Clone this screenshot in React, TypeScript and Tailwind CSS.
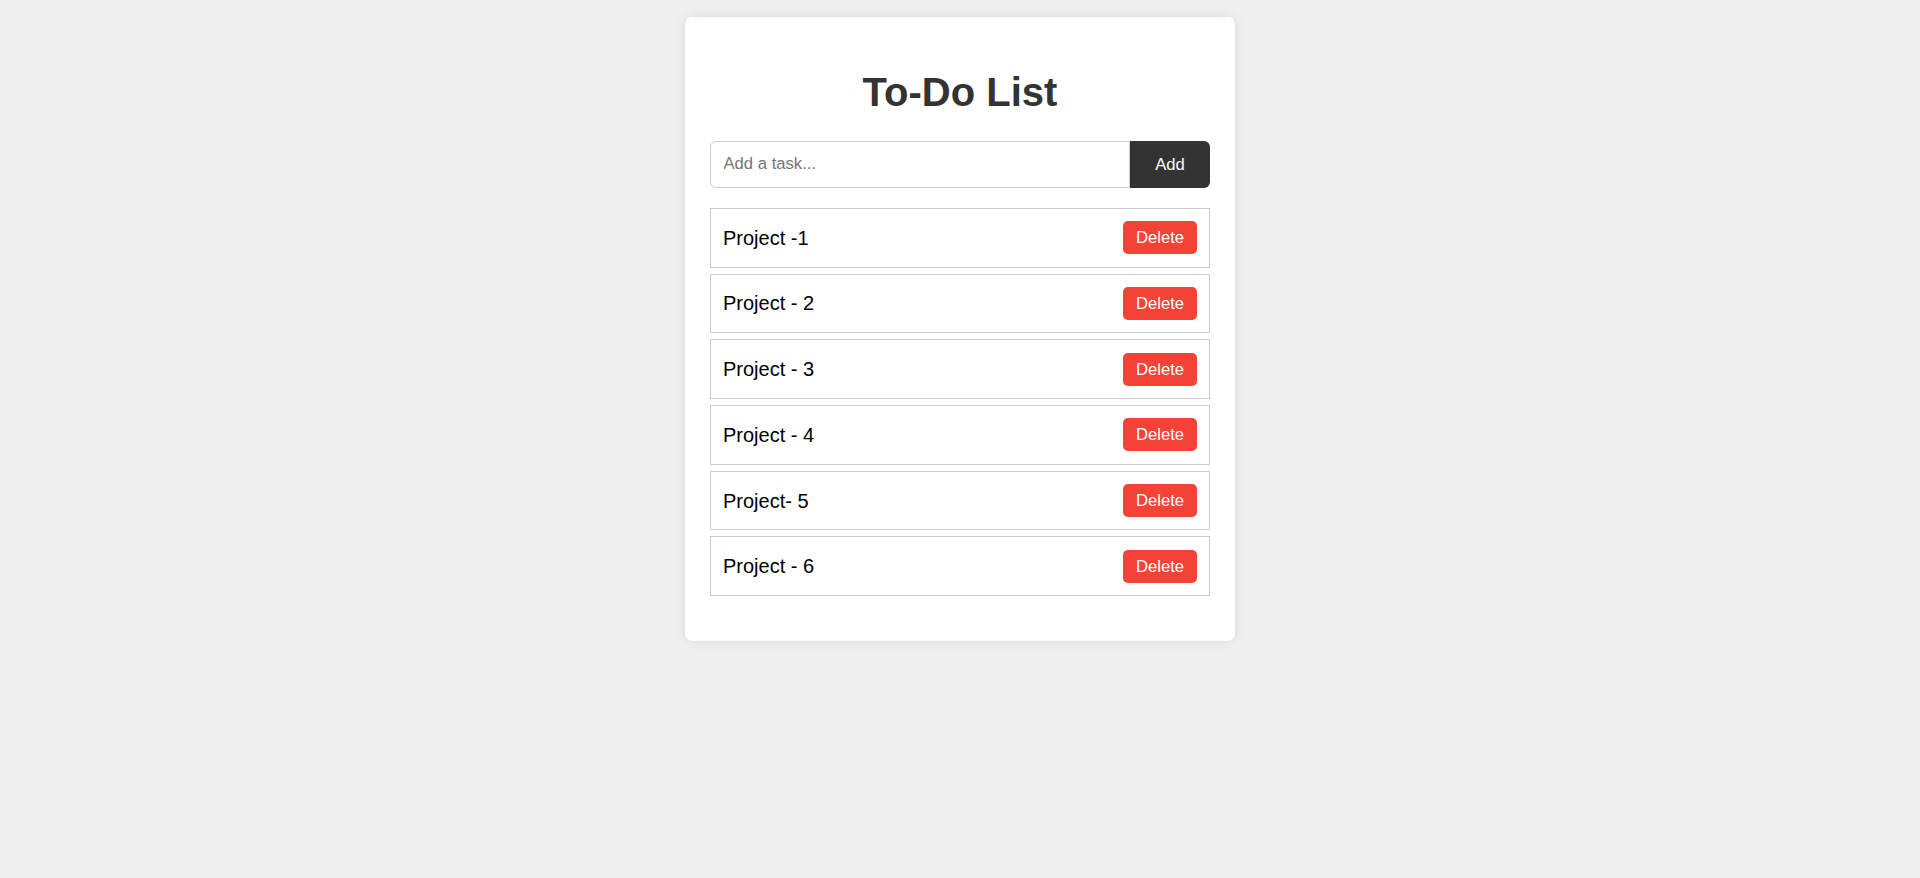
import React from "react";

const items = ["Project -1", "Project - 2", "Project - 3", "Project - 4", "Project- 5", "Project - 6"];

export default function App() {
  return (
    <div className="min-h-[878px] w-full bg-[#f0f0f0] pt-[17px] font-['Liberation_Sans',Arial,sans-serif]">
      <div className="mx-auto w-[550px] rounded-[7px] bg-white p-[25px] shadow-[0_0_12px_rgba(0,0,0,0.1)]">
        <h1 className="my-[26.5px] text-center text-[40px] leading-[46px] font-bold text-[#333]">To-Do List</h1>
        <div className="flex h-[47px]">
          <input
            type="text"
            placeholder="Add a task..."
            className="min-w-0 flex-1 rounded-l-[6px] border border-[#ccc] px-[12.5px] text-[16.67px] text-black outline-none placeholder:text-[#757575]"
          />
          <button className="w-[80px] rounded-r-[6px] bg-[#333] text-[16.67px] text-white">Add</button>
        </div>
        <ul className="mt-[20px] mb-[20px] flex flex-col gap-[6.2px]">
          {items.map((t) => (
            <li
              key={t}
              className="flex h-[59.5px] items-center justify-between border border-[#ccc] pr-[12px] pl-[12px] text-[20px] text-black"
            >
              <span>{t}</span>
              <button className="h-[33px] w-[74px] rounded-[5px] bg-[#f44336] text-[16.67px] text-white">Delete</button>
            </li>
          ))}
        </ul>
      </div>
    </div>
  );
}
